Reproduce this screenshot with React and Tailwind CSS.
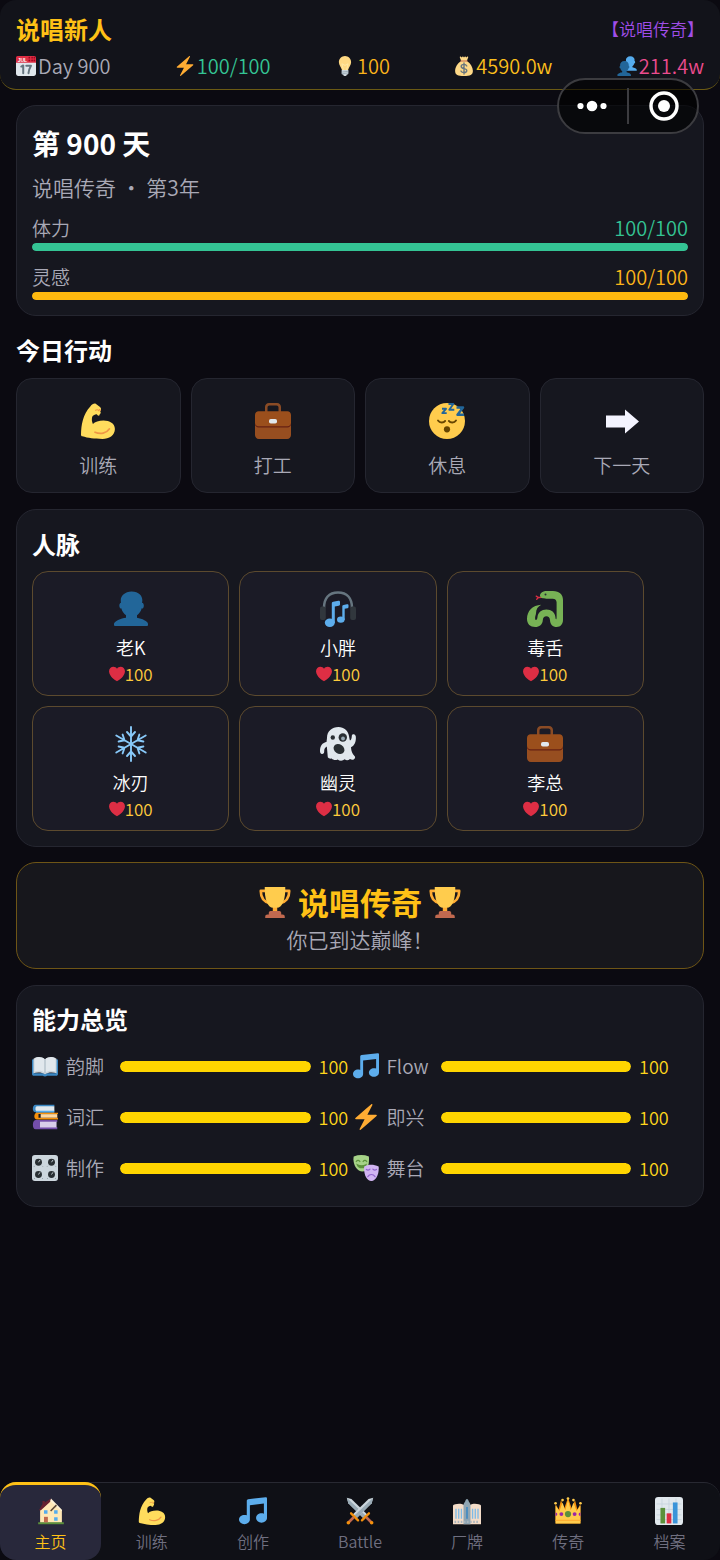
import clsx from "clsx";

const Svg = ({ className, children }) => (
  <svg viewBox="0 0 36 36" className={clsx("shrink-0", className)} aria-hidden="true">
    {children}
  </svg>
);

const BUST =
  "M24 26.799v-2.566c2-1.348 4.08-3.779 4.703-6.896.186.103.206.17.413.17.991 0 1.709-1.287 1.709-2.873 0-1.562-.823-2.827-1.794-2.865.187-.674.293-1.577.293-2.735C29.324 5.168 26 .527 18.541.527c-6.629 0-10.777 4.641-10.777 8.507 0 1.123.069 2.043.188 2.755-.911.137-1.629 1.352-1.629 2.845 0 1.587.804 2.873 1.796 2.873.206 0 .025-.067.209-.17C8.952 20.453 11 22.885 13 24.232v2.414c-5 .645-12 3.437-12 6.23v1.061C1 35 2.076 35 3.137 35h29.725C33.924 35 35 35 35 33.938v-1.061c0-2.615-6-5.225-11-6.078z";

const CalendarIcon = ({ className }) => (
  <Svg className={className}>
    <path fill="#E0E7EC" d="M36 32c0 2.2-1.8 4-4 4H4c-2.2 0-4-1.8-4-4V9h36z" />
    <path fill="#DD2E44" d="M3 0h30c1.7 0 3 1.3 3 3v9H0V3c0-1.7 1.3-3 3-3z" />
    <g fill="#A0041E">
      <circle cx="24" cy="3" r="1.5" />
      <circle cx="29" cy="3" r="1.5" />
      <circle cx="33" cy="3" r="1.5" />
      <circle cx="24" cy="8" r="1.5" />
      <circle cx="29" cy="8" r="1.5" />
      <circle cx="33" cy="8" r="1.5" />
    </g>
    <text x="3" y="10" fontSize="9" fontWeight="700" fill="#fff" fontFamily="Liberation Sans, sans-serif">
      JUL
    </text>
    <path
      fill="none"
      stroke="#66757F"
      strokeWidth="3.6"
      strokeLinecap="round"
      strokeLinejoin="round"
      d="M9.500 19l3.500-2v14M18.500 17.500h8.500c-2.500 4-4 8.500-4.500 13.500"
    />
  </Svg>
);

const BoltIcon = ({ className }) => (
  <Svg className={className}>
    <path
      fill="#FFAC33"
      d="M32.938 15.651C32.792 15.26 32.418 15 32 15H19.925L26.89 1.458c.219-.426.106-.947-.271-1.243C26.437.071 26.218 0 26 0c-.233 0-.466.082-.653.243L18 6.588 3.347 19.243c-.316.273-.43.714-.284 1.105S3.582 21 4 21h12.075L9.11 34.542c-.219.426-.106.947.271 1.243.182.144.401.215.619.215.233 0 .466-.082.653-.243L18 29.412l14.653-12.655c.317-.273.43-.714.285-1.106z"
    />
  </Svg>
);

const BulbIcon = ({ className }) => (
  <Svg className={className}>
    <path
      fill="#FFD983"
      d="M29 11.100C29 5 24 0 18 0S7 5 7 11.100c0 5.600 4 8.400 5 12.900.5 2 1.500 3 3 3h6c1.500 0 2.500-1 3-3 1-4.500 5-7.300 5-12.900z"
    />
    <path fill="none" stroke="#FFEBA8" strokeWidth="1.6" d="M15 25l-2.500-11 5.500 3 5.500-3L21 25" />
    <path fill="#CCD6DD" d="M12 25h12v6c0 1.500-1 2.500-2.500 2.500L20 36h-4l-1.500-2.500C13 33.500 12 32.500 12 31z" />
    <path stroke="#99AAB5" strokeWidth="1.5" d="M12 29l12-1.500M12 32l12-1.500" />
  </Svg>
);

const MoneyBagIcon = ({ className }) => (
  <Svg className={className}>
    <path
      fill="#FDD888"
      d="M13 9C6 13 2 21 2 27c0 7 5 9 16 9s16-2 16-9c0-6-4-14-11-18l2.500-6.500c.4-1.300-1-2-2-1.200L22 2.500 20 .5 18 2.500 16 .5l-2 2-1.500-1.200c-1-.8-2.400-.1-2 1.200z"
    />
    <path stroke="#BF6952" strokeWidth="2" strokeLinecap="round" d="M12 9h12" />
    <path
      fill="none"
      stroke="#67757F"
      strokeWidth="2.5"
      strokeLinecap="round"
      d="M23 18c-1-2-3-3-5-3-3 0-5 1.500-5 3.800 0 5.500 10 2.200 10 7.400 0 2.300-2 3.800-5 3.800-2.500 0-4.500-1-5.500-3M18 12.500v20"
    />
  </Svg>
);

const BustIcon = ({ className }) => (
  <Svg className={className}>
    <path fill="#226699" d={BUST} />
  </Svg>
);

const BustsIcon = ({ className }) => (
  <Svg className={className}>
    <path fill="#55ACEE" transform="translate(10.5 0) scale(.72 .76)" d={BUST} />
    <path fill="#226699" transform="translate(0 8.5) scale(.72 .78)" d={BUST} />
  </Svg>
);

const MuscleIcon = ({ className }) => (
  <Svg className={className}>
    <path
      fill="#FFDC5D"
      d="M10.500 3.200C12 1.200 14 .1 15.700.7l4.300 3.200c1 .9 1.300 1.900.8 3.100l-.6 1 .5 1.500c.1.800-.3 1.300-.9 1.500l-.3 1.200c-.5.7-1.600.6-2.100-.1l-.6-.9c-2.300.3-4.300 1.300-4.700 3-.5 2.400-.2 4.400.8 6.700 2-2.300 6-3.500 10.600-3.500 6.100 0 11.400 2.800 11.400 8.600 0 6.600-5.900 9.900-12.400 9.900-8.500 0-14.300-.9-20.200-2.600-.9-.3-1.300-.8-1.300-1.900C1.300 22 2.500 12 10.500 3.200z"
    />
    <path fill="none" stroke="#EF9645" strokeWidth="1.6" strokeLinecap="round" d="M15 29.200c5.500 2.400 11.500 1.200 14.500-3.400" />
    <path fill="none" stroke="#EF9645" strokeWidth="1.1" strokeLinecap="round" d="M15.500 7.200c1.500-.7 2.700-.4 3.500.6M19.400 6.500l1 .8" />
  </Svg>
);

const BriefcaseIcon = ({ className }) => (
  <Svg className={className}>
    <path fill="#8A4B25" d="M10 9V4c0-2.300 1.500-4 4-4h8c2.500 0 4 1.700 4 4v5h-2.500V4.500c0-1.200-.8-2-2-2h-7c-1.200 0-2 .8-2 2V9z" />
    <path fill="#974E20" d="M0 18h36v14c0 2.200-1.600 4-3.800 4H3.800C1.600 36 0 34.200 0 32z" />
    <path fill="#662113" d="M0 19h36v2c0 2-1.600 3.500-3.600 3.500H3.600C1.600 24.500 0 23 0 21z" />
    <path fill="#9B4F1C" d="M3.600 8.300h28.800c2 0 3.600 1.600 3.600 3.600v7.900c0 2-1.600 3.500-3.600 3.500H3.600c-2 0-3.600-1.500-3.600-3.500v-7.900c0-2 1.600-3.600 3.600-3.600z" />
    <rect x="14" y="16" width="8" height="4.5" rx="1.8" fill="#E1E8ED" />
  </Svg>
);

const SleepIcon = ({ className }) => (
  <Svg className={className}>
    <circle cx="18" cy="18" r="18" fill="#FFCC4D" />
    <g fill="none" stroke="#664500" strokeWidth="1.9" strokeLinecap="round">
      <path d="M9 17.500c1.800 2.600 5.500 2.600 7.200.4M19.800 17.900c1.700 2.200 5.400 2.200 7.200-.4" />
    </g>
    <circle cx="18" cy="26.3" r="3.1" fill="#664500" />
    <g fill="none" stroke="#226699" strokeWidth="1.9" strokeLinejoin="round">
      <path d="M13 5.800h4l-3.700 4.300h4.400" />
      <path d="M19.500 1h4.800l-4 5.700h5" />
      <path strokeWidth="2.5" d="M27.500 4.500H34l-5.500 7.300H35" />
    </g>
  </Svg>
);

const ArrowIcon = ({ className }) => (
  <Svg className={className}>
    <path fill="#F4F4FF" d="M2 12.500h19v-6l14 12-14 12v-6H2z" />
  </Svg>
);

const HeadphoneIcon = ({ className }) => (
  <Svg className={className}>
    <path fill="none" stroke="#66757F" strokeWidth="2.6" d="M4 17C4 7 9 1.500 18 1.500S32 7 32 17" />
    <rect x="0" y="15.500" width="5.800" height="13.5" rx="2" fill="#31373D" />
    <rect x="30.200" y="15.500" width="5.800" height="13.5" rx="2" fill="#31373D" />
    <g fill="#5DADEC">
      <ellipse cx="9.800" cy="31.800" rx="5" ry="4.200" />
      <path d="M11.800 12.500c0-1 .5-1.600 1.500-1.700l5-1c1-.2 1.700.3 1.700 1.200v2.200c0 .8-.4 1.300-1.300 1.500l-3.900.7V32h-3z" />
      <ellipse cx="20.800" cy="28.600" rx="3.800" ry="3.200" />
      <path d="M22.300 15.500c0-.8.4-1.300 1.200-1.400l3.500-.8c.9-.2 1.500.2 1.500 1v1.700c0 .7-.4 1.200-1.200 1.300l-2.600.5V29h-2.400z" />
    </g>
  </Svg>
);

const SnakeIcon = ({ className }) => (
  <Svg className={className}>
    <path fill="none" stroke="#DD2E44" strokeWidth="1.3" strokeLinecap="round" d="M15 6.300l-3.500.2-2.300-1.400M11.500 6.500L9.700 8.200" />
    <path
      fill="#77B255"
      d="M20 0h6c6.500 0 10 3.500 10 9v20c0 4.200-2.600 7-6.300 7-4 0-6.500-2.600-6.700-6.800-.1-2.400-1.500-4-3.600-4s-3.500 1.600-3.600 4c-.2 4.200-3.400 6.800-7.600 6.800C3.300 36 0 33 0 28 0 20 5.500 14.200 14.300 13.800c-3.300 1.500-5.300 4.600-5.300 8.400 0 1.400-.8 2.500-.9 4.500-.1 3.600 2.100 3 2.400-.6.4-4.700 4-7.700 8.900-7.700 5 0 8.700 3 9 7.700.2 3 1.200 3 1.200-.1V11.500c0-2.500-1.300-3.800-4-3.800h-6.200C16 7.700 13 6.900 13 4.600 13 2 16 0 20 0z"
    />
    <circle cx="18.500" cy="3.500" r="1" fill="#292F33" />
  </Svg>
);

const SnowIcon = ({ className }) => (
  <Svg className={className}>
    <g fill="none" stroke="#88C9F9" strokeWidth="1.9" strokeLinecap="round">
      {[0, 60, 120, 180, 240, 300].map((deg) => (
        <path key={deg} transform={`rotate(${deg} 18 18)`} d="M18 18V1M18 10.500l-4-4.500M18 10.500l4-4.500" />
      ))}
    </g>
  </Svg>
);

const GhostIcon = ({ className }) => (
  <Svg className={className}>
    <path
      fill="#E1E8ED"
      d="M7 12C7 5 12 1 18.500 1c5.500 0 9.500 3.700 10.500 9 .3 1.800.6 3.500 1 4.500 1.600-.6 1.700-3 1.800-4.500.1-1.500 1-2 2.200-1.700 1.200.3 2 1.600 1.900 3.700-.1 4-1.300 7.500-4.900 9.300.2 3.800 1.300 6.700 3.500 8.700 1 1 .8 2.200-.5 3.200-1.600 1.200-3 .2-4-.2-1.700 1.500-3.800 1.500-5.300.3-2 1.800-5 1.900-7 .1-2 1.200-4.500.8-6-.8-1.500.3-3.400-.2-3.900-1.300C7.500 28 7.200 24 6.800 20.500c-2 1.100-2.600 2.500-2.600 5 0 1.600-.8 2.500-2.200 2.400C.6 27.800 0 26.700 0 25c0-6 3-8.200 6.500-9z"
    />
    <circle cx="12.800" cy="11.500" r="2.200" fill="#292F33" />
    <circle cx="22.800" cy="11.500" r="4.200" fill="#292F33" />
    <circle cx="23" cy="12.500" r="1.900" fill="#99AAB5" />
    <ellipse cx="19" cy="23" rx="5.800" ry="4.700" transform="rotate(35 19 23)" fill="#292F33" />
  </Svg>
);

const HeartIcon = ({ className }) => (
  <Svg className={className}>
    <path
      fill="#DD2E44"
      d="M35.885 11.833c0-5.45-4.418-9.868-9.867-9.868-3.308 0-6.227 1.633-8.018 4.129-1.791-2.496-4.71-4.129-8.017-4.129-5.45 0-9.868 4.417-9.868 9.868 0 .772.098 1.52.266 2.241C1.751 22.587 11.216 31.568 18 34.034c6.783-2.466 16.249-11.447 17.617-19.959.17-.721.268-1.469.268-2.242z"
    />
  </Svg>
);

const TrophyIcon = ({ className }) => (
  <Svg className={className}>
    <path
      fill="none"
      stroke="#FFAC33"
      strokeWidth="3"
      strokeLinejoin="round"
      d="M9 5.500H2C2 13 5 18 13 19.500M27 5.500h7c0 7.500-3 12.500-11 14"
    />
    <path fill="#FFAC33" d="M15.500 20h5v11h-5z" />
    <path fill="#FFCC4D" d="M6.500 1h23c.5 13-3 23.500-9.500 23.500h-4C9.500 24.500 6 14 6.500 1z" />
    <path fill="#C1694F" d="M13 28h10c1 0 2 1 2 2v2h1.500c1.500 0 2.500 1 2.500 2.500V36H7v-1.500C7 33 8 32 9.500 32H11v-2c0-1 1-2 2-2z" />
  </Svg>
);

const BookIcon = ({ className }) => (
  <Svg className={className}>
    <path fill="#3B88C3" d="M0 9h3v19h12c2 0 4 0 6 0h12V9h3v20c0 1.500-1 2.500-2.500 2.500H21c-1.500 1.400-4.500 1.400-6 0H2.500C1 31.500 0 30.500 0 29z" />
    <path fill="#CCD6DD" d="M2 8c5-3 12-3 16 1 4-4 11-4 16-1v20c-5-1.500-12-1.500-16 1.500-4-3-11-3-16-1.500z" />
    <path fill="#E1E8ED" d="M3.500 7C8 4.500 14 5 18 8.500 22 5 28 4.500 32.500 7v18.500C28 24 22 24 18 27.500 14 24 8 24 3.500 25.500z" />
    <path stroke="#99AAB5" strokeWidth="1.2" d="M18 8.500v19" />
  </Svg>
);

const BooksIcon = ({ className }) => (
  <Svg className={className}>
    <path fill="#3B88C3" d="M5 1h26v2L5 11H4c-4 0-4-10 1-10z" />
    <path fill="#E1E8ED" d="M7 3h24v7H7c-3 0-3-7 0-7z" />
    <path fill="#55ACEE" d="M6 9.500h25V12H5z" />
    <path fill="#F4900C" d="M7 12h29v2H9v5h27v2.500H7c-5 0-5-9.500 0-9.500z" />
    <path fill="#FFD9A0" d="M12 14h23v5H12z" />
    <path fill="#744EAA" d="M5 22h30v3H11v7h24v3H5c-5 0-5-13 0-13z" />
    <path fill="#D8CDEA" d="M11 24.500h23v8H11z" />
  </Svg>
);

const KnobsIcon = ({ className }) => (
  <Svg className={className}>
    <rect width="36" height="36" rx="4" fill="#CCD6DD" />
    {[9, 27].map((x) =>
      [10, 27].map((y) => (
        <g key={`${x}-${y}`}>
          <circle cx={x} cy={y} r="4.8" fill="#292F33" />
          <path stroke="#CCD6DD" strokeWidth="1.3" d={`M${x} ${y}l2-3`} />
          <path stroke="#66757F" strokeWidth="1" d={`M${x - 5} ${y + 5}l-1 1M${x + 5} ${y + 5}l1 1`} />
        </g>
      ))
    )}
  </Svg>
);

const NoteIcon = ({ className }) => (
  <Svg className={className}>
    <path
      fill="#5DADEC"
      d="M34.209.206L11.791 2.793C10.806 2.907 10 3.811 10 4.803v18.782C9.09 23.214 8.075 23 7 23c-3.865 0-7 2.685-7 6 0 3.314 3.135 6 7 6s7-2.686 7-6V10.539l18-2.077v13.124c-.91-.372-1.925-.586-3-.586-3.865 0-7 2.685-7 6 0 3.314 3.135 6 7 6s7-2.686 7-6V1.803c0-.992-.806-1.71-1.791-1.597z"
    />
  </Svg>
);

const MasksIcon = ({ className }) => (
  <Svg className={className}>
    <path fill="#A6D388" d="M1 2c7-2.500 14-2.500 21 0 .8 9-1 21-9 21S-1 12 1 2z" />
    <g fill="none" stroke="#5C913B" strokeWidth="1.7" strokeLinecap="round">
      <path d="M4.500 9c1.500-2 3.500-2 5 0M14 9c1.500-2 3.500-2 5 0" />
      <path fill="#5C913B" d="M6 13.500c4 2 8 2 12 0-1.500 5.500-10 5.500-12 0z" />
    </g>
    <path fill="#D1B5F2" d="M15.500 16c6-3.500 13-3.500 20 0 1 9-3 20-10 20s-11-10-10-20z" />
    <g fill="none" stroke="#9266CC" strokeWidth="1.7" strokeLinecap="round">
      <path d="M18.500 20c2 1.500 3.500 1 5-.5M27.500 19.500c1.500 1.500 3 2 5 .5M20.500 30c2.500-4 7.500-4 10 0" />
    </g>
  </Svg>
);

const HouseIcon = ({ className }) => (
  <Svg className={className}>
    <path fill="#FFE8B6" d="M4 17L18 4l14 13v16H4z" />
    <path fill="#66212F" d="M2.500 17L7 9V5h3v2l8-5-1 4L5 17z" />
    <path fill="#FFF3D6" d="M18 2l14 14.500v2L17 5z" />
    <path fill="#5C913B" d="M1.500 32.500h33V35h-33z" />
    <path fill="none" stroke="#5F4A38" strokeWidth="2" d="M17.500 18L25 10.500" />
    <g fill="#55ACEE">
      <path d="M9 17h4.500v4.500H9zM22 17h4.500v4.500H22zM22 26h4.500v4.500H22z" />
    </g>
    <path fill="#C1694F" d="M9 25.500h5v7H9z" />
  </Svg>
);

const SwordsIcon = ({ className }) => (
  <Svg className={className}>
    {[0, 1].map((side) => (
      <g key={side} transform={side ? "translate(36 0) scale(-1 1)" : undefined}>
        <path fill="#CCD6DD" d="M1 1l6 1.500L28 23l-5 5L3 8z" />
        <path fill="#99AAB5" d="M1 1l25.500 24L23 28 3 8z" />
        <path fill="none" stroke="#F4900C" strokeWidth="3" strokeLinecap="round" d="M20.500 30l9-9" />
        <path fill="none" stroke="#C1694F" strokeWidth="3.5" strokeLinecap="round" d="M27 27l5.500 5.500" />
        <circle cx="33" cy="33" r="2.3" fill="#F4900C" />
      </g>
    ))}
  </Svg>
);

const BuildingIcon = ({ className }) => (
  <Svg className={className}>
    <path fill="#F3DCC8" d="M0 11c1-2.500 11-3.500 13-1h10c2-2.500 12-1.500 13 1v24H0z" />
    <path fill="#8FA5B3" d="M13.500 10c.5-2 1.500-3.500 2-4 .5-2 1.500-3.500 2.500-3.500S20 4 20.500 6c.5.500 1.500 2 2 4v25h-9z" />
    <g fill="#7DBBE8">
      <path d="M3 15h1.700v13H3zM6.500 15h1.700v13H6.500zM10 15h1.700v13H10zM24.300 15H26v13h-1.700zM27.800 15h1.700v13h-1.700zM31.300 15H33v13h-1.700z" />
      <path fill="#3B88C3" d="M17 13h2v15h-2z" />
    </g>
    <path stroke="#A9B5BE" strokeWidth="3" strokeDasharray="2 2" d="M2 32h32" />
  </Svg>
);

const CrownIcon = ({ className }) => (
  <Svg className={className}>
    <path
      fill="#F4900C"
      d="M2 34V9l4 7 3-12 4 11 5-14 5 14 4-11 3 12 4-7v25z"
    />
    <path fill="#FFCC4D" d="M2 34V11l5 7 4-11 3.500 10L18 4l3.500 13L25 7l4 11 5-7v23z" />
    <path stroke="#FFAC33" strokeWidth="1.5" d="M2 30h32" />
    <g fill="#FFCC4D">
      <circle cx="2" cy="8" r="1.700" />
      <circle cx="11" cy="4" r="1.700" />
      <circle cx="18" cy="2" r="1.700" />
      <circle cx="25" cy="4" r="1.700" />
      <circle cx="34" cy="8" r="1.700" />
    </g>
    <circle cx="18" cy="22" r="4" fill="#5C913B" />
    <circle cx="9.500" cy="22" r="2.5" fill="#9B27A8" />
    <circle cx="26.500" cy="22" r="2.5" fill="#9B27A8" />
    <path fill="#9B27A8" d="M2 20c3 0 3 4.500 0 4.500zM34 20c-3 0-3 4.500 0 4.500z" />
  </Svg>
);

const ChartIcon = ({ className }) => (
  <Svg className={className}>
    <rect width="36" height="36" rx="4" fill="#E1E8ED" />
    <path stroke="#C5D2DB" strokeWidth="1" d="M2 9h32M2 16h32M2 23h32M2 29h32M9 2v32M18 2v32M27 2v32" />
    <path fill="#5C913B" d="M7 14h6v20H7z" />
    <path fill="#DD2E44" d="M15 21h6v13h-6z" />
    <path fill="#3B94D9" d="M23 7h6v27h-6z" />
  </Svg>
);

const resources = [
  { icon: CalendarIcon, text: "Day 900", color: "text-[#a9a9b6]" },
  { icon: BoltIcon, text: "100/100", color: "text-[#34c494]" },
  { icon: BulbIcon, text: "100", color: "text-[#fbb41a]" },
  { icon: MoneyBagIcon, text: "4590.0w", color: "text-[#fbbf1c]" },
  { icon: BustsIcon, text: "211.4w", color: "text-[#ec4c8e]" },
];

const actions = [
  { icon: MuscleIcon, label: "训练" },
  { icon: BriefcaseIcon, label: "打工" },
  { icon: SleepIcon, label: "休息" },
  { icon: ArrowIcon, label: "下一天" },
];

const people = [
  { icon: BustIcon, name: "老K", value: 100 },
  { icon: HeadphoneIcon, name: "小胖", value: 100 },
  { icon: SnakeIcon, name: "毒舌", value: 100 },
  { icon: SnowIcon, name: "冰刃", value: 100 },
  { icon: GhostIcon, name: "幽灵", value: 100 },
  { icon: BriefcaseIcon, name: "李总", value: 100 },
];

const skills = [
  { icon: BookIcon, name: "韵脚", value: 100 },
  { icon: NoteIcon, name: "Flow", value: 100 },
  { icon: BooksIcon, name: "词汇", value: 100 },
  { icon: BoltIcon, name: "即兴", value: 100 },
  { icon: KnobsIcon, name: "制作", value: 100 },
  { icon: MasksIcon, name: "舞台", value: 100 },
];

const tabs = [
  { icon: HouseIcon, label: "主页", active: true },
  { icon: MuscleIcon, label: "训练" },
  { icon: NoteIcon, label: "创作" },
  { icon: SwordsIcon, label: "Battle" },
  { icon: BuildingIcon, label: "厂牌" },
  { icon: CrownIcon, label: "传奇" },
  { icon: ChartIcon, label: "档案" },
];

const Header = () => (
  <header className="rounded-2xl border-b border-[#6b5a14] bg-[#12131a] px-4 pt-[11px] pb-2">
    <div className="flex items-center justify-between">
      <h1 className="text-[24px] leading-9 font-bold text-[#ffc116]">说唱新人</h1>
      <span className="text-[17px] text-[#a04ee8]">【说唱传奇】</span>
    </div>
    <div className="mt-1 flex items-center justify-between text-[20px] leading-[30px]">
      {resources.map(({ icon: Icon, text, color }) => (
        <span key={text} className={clsx("flex items-center gap-0.5", color)}>
          <Icon className="size-5" />
          {text}
        </span>
      ))}
    </div>
  </header>
);

// Floating mini program menu
const Capsule = () => (
  <div className="absolute top-[78px] right-[21px] flex h-14 w-[142px] items-center rounded-full border-2 border-[#3c3c40] bg-black/60">
    <button type="button" aria-label="更多" className="flex flex-1 justify-center pr-0.5">
      <svg viewBox="0 0 32 12" className="h-3 w-8" fill="#fff" aria-hidden="true">
        <circle cx="4.500" cy="6" r="3.100" />
        <circle cx="16" cy="6" r="5.300" />
        <circle cx="27.500" cy="6" r="3.100" />
      </svg>
    </button>
    <span className="h-9 w-0.5 bg-[#3c3c40]" />
    <button type="button" aria-label="关闭" className="flex flex-1 justify-center pl-0.5">
      <svg viewBox="0 0 30 30" className="size-[30px]" aria-hidden="true">
        <circle cx="15" cy="15" r="13" fill="none" stroke="#fff" strokeWidth="3.4" />
        <circle cx="15" cy="15" r="6" fill="#fff" />
      </svg>
    </button>
  </div>
);

const Card = ({ className, children }) => (
  <section className={clsx("rounded-[20px] border border-[#252630] bg-[#16171f] px-[15px]", className)}>
    {children}
  </section>
);

const StatBar = ({ label, value, text, bar }) => (
  <div className="mt-3.5">
    <div className="flex items-center justify-between leading-6">
      <span className="text-[19px] text-[#a9a9b6]">{label}</span>
      <span className={clsx("text-[20px]", text)}>{value}/100</span>
    </div>
    <div className="mt-[3px] h-2 overflow-hidden rounded-full bg-[#252630]">
      <div className={clsx("h-full rounded-full", bar)} style={{ width: `${value}%` }} />
    </div>
  </div>
);

export default function App() {
  return (
    <div className="relative flex min-h-screen flex-col bg-[#0b0a11] font-['Noto_Sans_CJK_SC',sans-serif] font-[350] text-white">
      <Header />
      <Capsule />

      <main className="flex-1 px-4 pt-[15px] pb-4">
        <Card className="py-[15px]">
          <h2 className="text-[28px] leading-[44px] font-bold">第 900 天</h2>
          <p className="mt-[7px] text-[21px] leading-[30px] text-[#a9a9b6]">说唱传奇 · 第3年</p>
          <StatBar label="体力" value={100} text="text-[#34c494]" bar="bg-[#34c494]" />
          <StatBar label="灵感" value={100} text="text-[#fbb41a]" bar="bg-[#ffb90f]" />
        </Card>

        <h2 className="mt-[18px] text-[24px] leading-8 font-bold">今日行动</h2>
        <div className="mt-3 grid grid-cols-4 gap-2.5">
          {actions.map(({ icon: Icon, label }) => (
            <button
              key={label}
              type="button"
              className="flex flex-col items-center rounded-2xl border border-[#252630] bg-[#16171f] pt-6 pb-[13px]"
            >
              <Icon className="size-9" />
              <span className="mt-3 text-[19px] leading-7 text-[#a9a9b6]">{label}</span>
            </button>
          ))}
        </div>

        <Card className="mt-4 pt-3.5 pb-[15px]">
          <h2 className="text-[24px] leading-10 font-bold">人脉</h2>
          <div className="mt-[7px] grid grid-cols-3 gap-2.5 pr-11">
            {people.map(({ icon: Icon, name, value }) => (
              <div
                key={name}
                className="flex flex-col items-center rounded-2xl border border-[#5c4a2e] bg-[#1b1b26] pt-[19px] pb-2"
              >
                <Icon className="size-9" />
                <span className="mt-2 text-[18px] leading-6">{name}</span>
                <span className="mt-[3px] flex items-center pb-px text-[17px] leading-6 text-[#ffcb3c]">
                  <HeartIcon className="size-4" />
                  {value}
                </span>
              </div>
            ))}
          </div>
        </Card>

        <section className="mt-[15px] rounded-[20px] border border-[#6e5516] bg-[#17171c] pt-[15px] pb-4 text-center">
          <h2 className="flex items-center justify-center gap-[7px] text-[31px] leading-[48px] font-bold text-[#ffc116]">
            <TrophyIcon className="size-8" />
            说唱传奇
            <TrophyIcon className="size-8" />
          </h2>
          <p className="text-[21px] leading-[26px] text-[#a9a9b6]">你已到达巅峰！</p>
        </section>

        <Card className="mt-4 pt-[13px] pb-[25px]">
          <h2 className="text-[24px] leading-10 font-bold">能力总览</h2>
          <div className="mt-3.5 grid grid-cols-2 gap-y-[25px] pr-[15px]">
            {skills.map(({ icon: Icon, name, value }) => (
              <div key={name} className="flex h-[26px] items-center gap-2">
                <Icon className="size-[26px]" />
                <span className="w-[46px] text-[19px] text-[#a9a9b6]">{name}</span>
                <div className="h-[11px] flex-1 overflow-hidden rounded-full bg-[#252630]">
                  <div className="h-full rounded-full bg-[#ffd500]" style={{ width: `${value}%` }} />
                </div>
                <span className="w-[34px] text-[18px] text-[#ffd61c]">{value}</span>
              </div>
            ))}
          </div>
        </Card>
      </main>

      <nav className="flex rounded-2xl border-t border-[#282932] bg-[#0f1016]">
        {tabs.map(({ icon: Icon, label, active }) => (
          <a
            key={label}
            href="#"
            aria-current={active ? "page" : undefined}
            className={clsx(
              "-mt-px flex flex-auto flex-col items-center rounded-2xl border-t-3 pt-3 pb-[7px]",
              active ? "border-[#ffc116] bg-[#28283b] text-[#ffc116]" : "border-transparent text-[#6f6f80]"
            )}
          >
            <Icon className="size-7" />
            <span className="mt-1 text-[16px] leading-6">{label}</span>
          </a>
        ))}
      </nav>
    </div>
  );
}
